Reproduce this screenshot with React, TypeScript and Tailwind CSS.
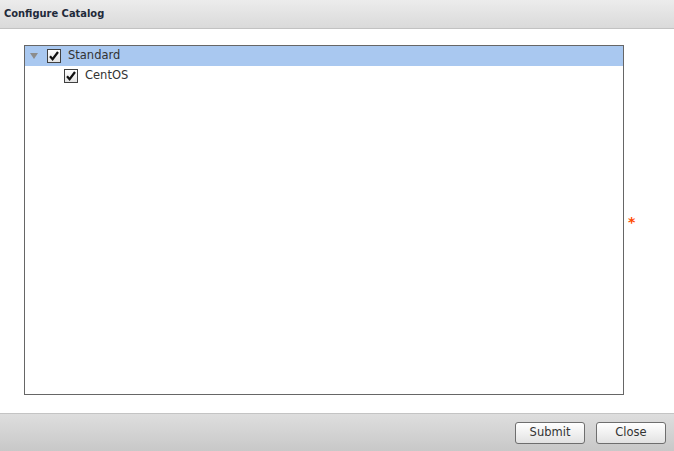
import React from "react";

const font = { fontFamily: '"DejaVu Sans", Verdana, sans-serif' };

function CheckBox() {
  return (
    <div className="shrink-0 w-[14px] h-[14px] border border-[#404040] bg-gradient-to-b from-white to-[#e4e4e4] flex items-center justify-center">
      <svg width="12" height="12" viewBox="0 0 12 12">
        <path d="M2 6.2 L4.6 9.2 L10 2" fill="none" stroke="#111" strokeWidth="2.2" />
      </svg>
    </div>
  );
}

function TreeRow({ label, depth, expanded, selected }: { label: string; depth: number; expanded?: boolean; selected?: boolean }) {
  return (
    <div className={`flex items-center h-[20px] ${selected ? "bg-[#a9c8f0]" : ""}`}>
      <div className="flex items-center" style={{ paddingLeft: depth === 0 ? 5 : 39 }}>
        {expanded !== undefined && (
          <svg width="8" height="6" viewBox="0 0 8 6" className="mr-[9px]">
            <path d="M0 0 H8 L4 6 Z" fill="#8c8c8c" />
          </svg>
        )}
        <CheckBox />
        <span className="ml-[7px] text-[11.5px] text-[#333] leading-none">{label}</span>
      </div>
    </div>
  );
}

function Button({ label }: { label: string }) {
  return (
    <button className="w-[70px] h-[22px] rounded-[3px] border border-[#6e6e6e] bg-gradient-to-b from-white to-[#e2e2e2] text-[11.5px] text-[#333]">
      {label}
    </button>
  );
}

export default function App() {
  return (
    <div className="w-[674px] h-[451px] flex flex-col bg-white" style={font}>
      <div className="h-[29px] shrink-0 border-b border-[#c2c2c2] bg-gradient-to-b from-[#ececec] to-[#dadada] flex items-center px-[4px]">
        <span className="text-[11px] font-bold text-[#1f2a3a]" style={{ fontFamily: '"DejaVu Sans Condensed", "DejaVu Sans", sans-serif', fontStretch: "condensed" }}>
          Configure Catalog
        </span>
      </div>

      <div className="flex-1 flex items-center pl-[24px] pt-[15px] pb-[18px]">
        <div className="w-[600px] h-[350px] border border-[#666] bg-white">
          <TreeRow label="Standard" depth={0} expanded selected />
          <TreeRow label="CentOS" depth={1} />
        </div>
        <span className="ml-[4px] text-[#ff4a00] text-[14px] font-bold leading-none mt-[5px]">*</span>
      </div>

      <div className="h-[38px] shrink-0 border-t border-[#c4c4c4] bg-gradient-to-b from-[#dedede] to-[#c8c8c8] flex items-center justify-end gap-[11px] pr-[8px] pt-[1px]">
        <Button label="Submit" />
        <Button label="Close" />
      </div>
    </div>
  );
}
